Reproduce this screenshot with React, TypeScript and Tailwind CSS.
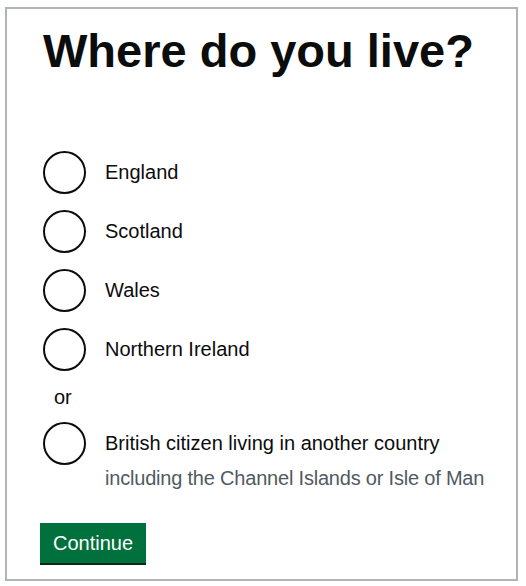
import React from "react";

function Radio({ label, hint }: { label: string; hint?: string }) {
  return (
    <div className="flex items-start">
      <div className="w-[43px] h-[43px] rounded-full border-2 border-[#0b0c0c] shrink-0 bg-white" />
      <div className="ml-[19px] pt-[9px]">
        <div className="text-[20px] leading-[25px] text-[#0b0c0c]">{label}</div>
        {hint && <div className="text-[20px] leading-[25px] text-[#505a5f] mt-[10px] tracking-[-0.2px]">{hint}</div>}
      </div>
    </div>
  );
}

export default function App() {
  return (
    <div className="pl-[5px] pt-[7px] font-['Liberation_Sans',Arial,sans-serif]">
      <div className="w-[513px] h-[574px] border-2 border-[#b1b4b6] bg-white pl-[36px] pt-[14px]">
        <h1 className="text-[47px] leading-[56px] font-bold text-[#0b0c0c]">Where do you live?</h1>
        <div className="mt-[72px] flex flex-col gap-[16px]">
          <Radio label="England" />
          <Radio label="Scotland" />
          <Radio label="Wales" />
          <Radio label="Northern Ireland" />
        </div>
        <div className="text-[20px] leading-[25px] text-[#0b0c0c] mt-[14px] ml-[11px]">or</div>
        <div className="mt-[12px]">
          <Radio label="British citizen living in another country" hint="including the Channel Islands or Isle of Man" />
        </div>
        <button className="mt-[32px] -ml-[3px] bg-[#00703c] text-white text-[20px] leading-[25px] px-[13px] pt-[8px] pb-[7px] shadow-[0_2px_0_#002d18]">
          Continue
        </button>
      </div>
    </div>
  );
}
